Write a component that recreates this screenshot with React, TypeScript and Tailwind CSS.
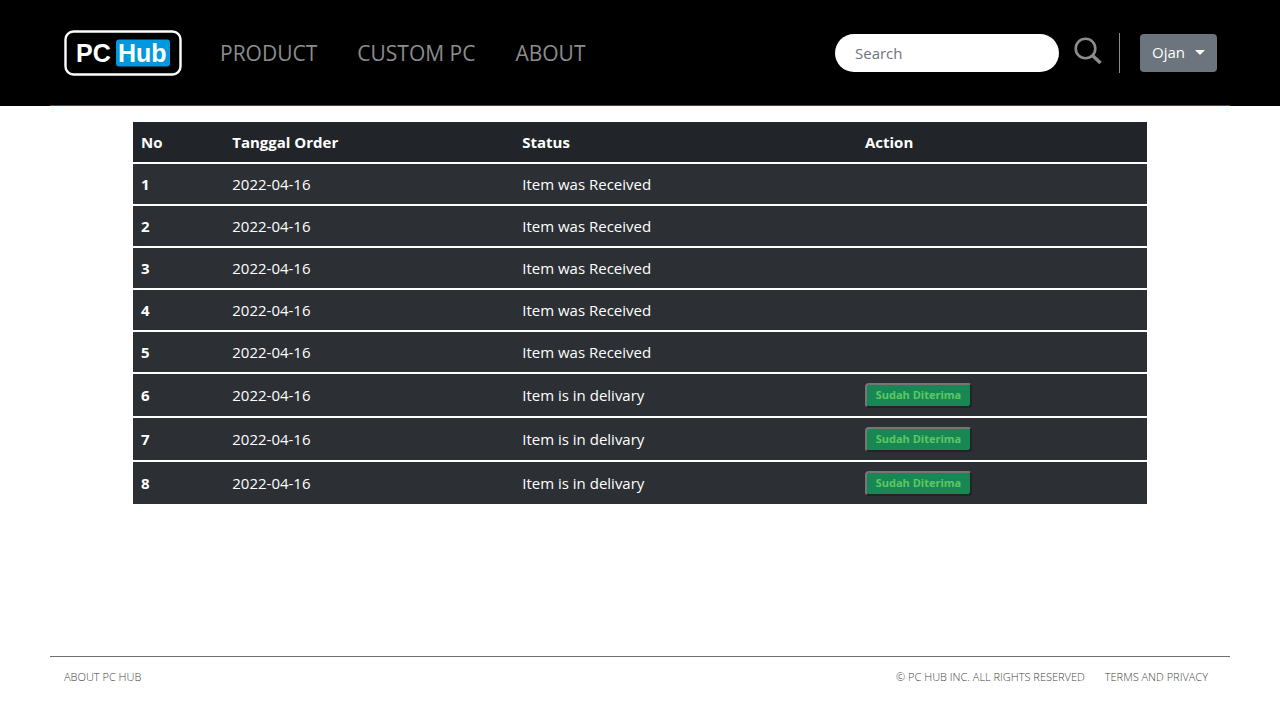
const navLinks = ['PRODUCT', 'CUSTOM PC', 'ABOUT'];

type Order = { no: number; date: string; delivered: boolean };

const orders: Order[] = [1, 2, 3, 4, 5, 6, 7, 8].map((no) => ({
  no,
  date: '2022-04-16',
  delivered: no <= 5,
}));

const cell = 'border-b-2 border-white px-2';

function Logo() {
  return (
    <svg width="118" height="46" viewBox="0 0 118 46" role="img" aria-label="PC Hub">
      <rect x="1.5" y="1.5" width="115" height="43" rx="8" fill="#000" stroke="#fff" strokeWidth="2.4" />
      <rect x="52" y="9.5" width="54" height="27" rx="3" fill="#0099e0" />
      <g fill="#fff" fontFamily="'Liberation Sans', Arial, sans-serif" fontWeight="700" fontSize="25">
        <text x="12" y="32">PC</text>
        <text x="54" y="32">Hub</text>
      </g>
    </svg>
  );
}

function SearchIcon() {
  return (
    <svg width="28" height="28" viewBox="0 0 28 28" fill="none" stroke="#8c8c8c" aria-hidden="true">
      <circle cx="11.5" cy="11.5" r="9.8" strokeWidth="2.6" />
      <path d="M18.5 18.5L26.5 26" strokeWidth="3.4" />
    </svg>
  );
}

function Header() {
  return (
    <header className="bg-black px-[50px]">
      <div className="flex h-[106px] items-center border-b border-[#174a96] pl-3.5 pr-[13px]">
        <a href="#" className="shrink-0">
          <Logo />
        </a>
        <nav className="ml-[38px] flex gap-10 text-[21px] leading-8 text-[#8c8c8c]">
          {navLinks.map((label) => (
            <a key={label} href="#" className="whitespace-nowrap">
              {label}
            </a>
          ))}
        </nav>
        <div className="ml-auto flex items-center">
          <input
            type="search"
            aria-label="Search"
            placeholder="Search"
            className="h-[38px] w-56 rounded-full bg-white px-5 text-[15px] text-[#212529] placeholder:text-[#6c757d]"
          />
          <button type="button" aria-label="Search" className="ml-[15px] pb-1">
            <SearchIcon />
          </button>
          <div className="ml-[17px] h-10 border-l border-[#8c8c8c]" />
          <button
            type="button"
            className="ml-5 flex h-[38px] w-[77px] items-center justify-between rounded bg-[#6c757d] px-3 text-[15px] text-white"
          >
            Ojan
            <svg width="10" height="5" viewBox="0 0 10 5" aria-hidden="true">
              <path d="M0 0H10L5 5Z" fill="#fff" />
            </svg>
          </button>
        </div>
      </div>
    </header>
  );
}

function OrdersTable() {
  return (
    <table className="mx-auto w-full max-w-[1014px] table-fixed border-separate border-spacing-0 text-left text-[15px] leading-6 text-white">
      <thead>
        <tr className="h-[42px] bg-[#212529]">
          <th scope="col" className={`${cell} w-[9%]`}>No</th>
          <th scope="col" className={`${cell} w-[28.6%]`}>Tanggal Order</th>
          <th scope="col" className={`${cell} w-[33.8%]`}>Status</th>
          <th scope="col" className={cell}>Action</th>
        </tr>
      </thead>
      <tbody>
        {orders.map(({ no, date, delivered }) => (
          <tr key={no} className={`bg-[#2c3034] ${delivered ? 'h-[42px]' : 'h-11'}`}>
            <th scope="row" className={cell}>{no}</th>
            <td className={cell}>{date}</td>
            <td className={cell}>{delivered ? 'Item was Received' : 'Item is in delivary'}</td>
            <td className={cell}>
              {!delivered && (
                <button
                  type="button"
                  className="block h-[25px] w-[107px] whitespace-nowrap rounded border-2 border-b-[#212529] border-l-[#767676] border-r-[#212529] border-t-[#767676] bg-[#198754] text-[11px] leading-5 font-bold text-[#5dc863]"
                >
                  Sudah Diterima
                </button>
              )}
            </td>
          </tr>
        ))}
      </tbody>
    </table>
  );
}

function Footer() {
  return (
    <footer className="px-[50px]">
      <div className="flex h-16 justify-between border-t border-[#6f6f6f] pl-3.5 pr-[22px] pt-3 text-[11px] leading-4 font-light text-[#444]">
        <a href="#">ABOUT PC HUB</a>
        <div className="flex gap-5">
          <span>© PC HUB INC. ALL RIGHTS RESERVED</span>
          <a href="#">TERMS AND PRIVACY</a>
        </div>
      </div>
    </footer>
  );
}

export default function App() {
  return (
    <div className="flex min-h-screen flex-col bg-white font-['Open_Sans','Noto_Sans',sans-serif]">
      <Header />
      <main className="grow pt-4">
        <OrdersTable />
      </main>
      <Footer />
    </div>
  );
}
